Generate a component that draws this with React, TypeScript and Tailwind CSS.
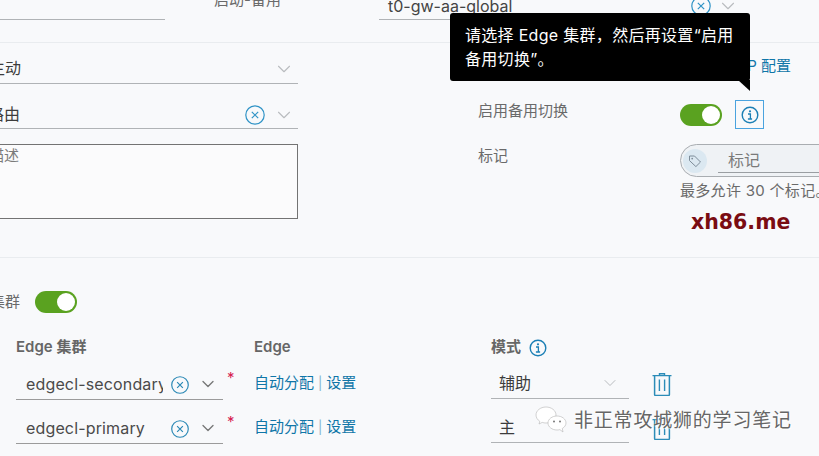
import { ChevronDown } from "lucide-react";

const cjk = "font-['Inter','Noto_Sans_CJK_SC',sans-serif]";

const CircleX = ({ size = 20, color = "#2f93c6", width = 1.2 }: { size?: number; color?: string; width?: number }) => (
  <svg width={size} height={size} viewBox="0 0 20 20" fill="none" className="shrink-0">
    <circle cx="10" cy="10" r="9.2" stroke={color} strokeWidth={width} />
    <path d="M6.8 6.8l6.4 6.4M13.2 6.8l-6.4 6.4" stroke={color} strokeWidth={width} />
  </svg>
);

const InfoIcon = ({ size = 18 }: { size?: number }) => (
  <svg width={size} height={size} viewBox="0 0 18 18" fill="none" className="shrink-0">
    <circle cx="9" cy="9" r="7.8" stroke="#1b7fb5" strokeWidth="1.4" />
    <circle cx="9" cy="5.3" r="1.1" fill="#1b7fb5" />
    <path d="M7 8h2.4v4.6M6.9 13h4.2" stroke="#1b7fb5" strokeWidth="1.3" />
  </svg>
);

const TrashIcon = () => (
  <svg width="20" height="23" viewBox="0 0 20 23" fill="none" className="shrink-0">
    <path d="M7.5 2V.8h5V2M0.5 2.6h19" stroke="#2b8cb8" strokeWidth="1.4" />
    <path d="M2.6 3v18.6a.8.8 0 0 0 .8.8h13.2a.8.8 0 0 0 .8-.8V3" stroke="#2b8cb8" strokeWidth="1.5" />
    <path d="M7.4 6.5v11.5M12.6 6.5v11.5" stroke="#2b8cb8" strokeWidth="1.4" />
  </svg>
);

const Toggle = () => (
  <div className="flex h-[22px] w-[42px] shrink-0 items-center justify-end rounded-full bg-[#5aa220] pr-[2px]">
    <div className="h-[18px] w-[18px] rounded-full bg-white" />
  </div>
);

const Chevron = ({ color = "#b9bcbf" }: { color?: string }) => (
  <ChevronDown size={22} strokeWidth={1.2} color={color} className="shrink-0" />
);

const clusterRows = [
  { name: "edgecl-secondary", mode: "辅助" },
  { name: "edgecl-primary", mode: "主" },
];

export default function App() {
  return (
    <div className={`relative h-[456px] w-[819px] overflow-hidden bg-[#f8f9fb] text-[15px] text-[#565656] ${cjk}`}>
      {/* top row, cut by the screenshot */}
      <div className="flex h-[43px] border-b border-[#e9ecef]">
        <div className="h-[20px] w-[165px] border-b border-[#b0b3b6]" />
        <div className="ml-[49px] -mt-[11px] h-[20px] w-[80px] whitespace-nowrap text-[#6a6a6a]">启动-备用</div>
        <div className="ml-[85px] -mt-[5px] flex h-[25px] w-[360px] items-center border-b border-[#b0b3b6] pb-[2px] pl-[9px] text-[16px] text-[#444]">
          <span className="flex-1">t0-gw-aa-global</span>
          <span className="flex items-center gap-[6px]">
            <CircleX />
            <Chevron />
          </span>
        </div>
      </div>

      {/* middle form */}
      <div className="flex h-[215px] border-b border-[#e9ecef]">
        <div className="w-[298px] shrink-0 pt-[12px]">
          <div className="flex h-[29px] items-center justify-between border-b border-[#b0b3b6] pr-[3px] text-[#3c3c3c]">
            <span className="-ml-[11px] -mt-[2px] text-[16px]">主动</span>
            <Chevron />
          </div>
          <div className="mt-[17px] flex h-[28px] items-center justify-between border-b border-[#b0b3b6] pr-[3px] text-[#3c3c3c]">
            <span className="-ml-[12px] -mt-[2px] text-[16px]">路由</span>
            <span className="flex items-center gap-[8px]">
              <CircleX />
              <Chevron />
            </span>
          </div>
          <div className="mt-[15px] -ml-[2px] h-[75px] overflow-hidden border border-[#737373] bg-[#fbfbfc] leading-[22px] text-[#7b7b7b]">
            <span className="-ml-[10px] block">描述</span>
          </div>
        </div>

        <div className="ml-[180px] w-[341px] shrink-0">
          <div className="flex h-[46px] justify-end pr-[28px] pt-[12px] text-[#0f76a8]">P 配置</div>
          <div className="mt-[11px] flex h-[29px] items-center">
            <span className="-mt-[7px] w-[202px] shrink-0 text-[#6a6a6a]">启用备用切换</span>
            <Toggle />
            <span className="ml-[13px] flex h-[29px] w-[29px] shrink-0 items-center justify-center border border-[#4aa3df]">
              <InfoIcon />
            </span>
          </div>
          <div className="mt-[15px] flex">
            <span className="w-[202px] shrink-0 pt-[1px] text-[#6a6a6a]">标记</span>
            <div>
              <div className="flex h-[33px] w-[200px] items-center rounded-l-full border border-[#a9adb1] bg-[#eff2f5] pl-[2px]">
                <span className="flex h-[24px] w-[24px] shrink-0 items-center justify-center rounded-full bg-[#dbe8f1]">
                  <svg width="14" height="14" viewBox="0 0 14 14" fill="none">
                    <path d="M1.5 2h5l6 6-4.6 4.6-6.4-6z" stroke="#7d8c99" strokeWidth="1" />
                    <circle cx="4.2" cy="4.6" r="0.9" fill="#7d8c99" />
                  </svg>
                </span>
                <span className="ml-[11px] flex h-[25px] w-[200px] items-center border-b border-[#9a9ea2] pl-[10px] text-[16px] text-[#7a7a7a]">标记</span>
              </div>
              <div className="mt-[3px] whitespace-nowrap tracking-[0.3px] text-[#6a6a6a]">最多允许 30 个标记。</div>
            </div>
          </div>
          <div className="ml-[213px] mt-[4px] whitespace-nowrap font-['DejaVu_Sans',sans-serif] text-[20.5px] font-bold leading-[30px] text-[#7a0c12]">xh86.me</div>
        </div>
      </div>

      {/* edge clusters */}
      <div className="flex items-center pt-[33px]">
        <span className="-ml-[10px] w-[45px] shrink-0 text-[#6a6a6a]">集群</span>
        <Toggle />
      </div>
      <div className="ml-[16px] mt-[24px] flex h-[20px] items-center font-semibold text-[#666]">
        <span className="w-[238px]">Edge 集群</span>
        <span className="w-[237px]">Edge</span>
        <span className="flex items-center gap-[8px]">
          模式
          <InfoIcon />
        </span>
      </div>
      <div className="ml-[16px] mt-[11px] flex flex-col gap-[13px]">
        {clusterRows.map((row) => (
          <div key={row.name} className="flex h-[31px]">
            <div className="flex h-[31px] w-[207px] shrink-0 items-center border-b border-[#9b9b9b] pl-[10px] text-[16px] tracking-[0.15px] text-[#4a4a4a]">
              <span className="w-[137px] shrink-0 overflow-hidden whitespace-nowrap">{row.name}</span>
              <span className="ml-[8px] mt-[2px]"><CircleX size={18} color="#2a88b5" width={1.3} /></span>
              <ChevronDown size={20} strokeWidth={1.6} color="#777" className="ml-[9px]" />
            </div>
            <span className="ml-[4px] -mt-[2px] w-[27px] shrink-0 text-[#d6204e]">*</span>
            <div className="flex h-[30px] w-[237px] shrink-0 items-center whitespace-nowrap text-[#0f76a8]">
              自动分配<span className="mx-[4px] text-[13px] text-[#7fb2cc]">|</span>设置
            </div>
            <div className="flex h-[30px] w-[138px] shrink-0 items-center justify-between border-b border-[#b0b3b6] pl-[8px] pr-[9px] text-[16px] text-[#3c3c3c]">
              {row.mode}
              {row.mode === "辅助" ? <ChevronDown size={20} strokeWidth={1.2} color="#b9bcbf" /> : null}
            </div>
            <span className="ml-[23px] mt-[4px]"><TrashIcon /></span>
          </div>
        ))}
      </div>

      {/* tooltip */}
      <div className="absolute left-[450px] top-[13px] h-[68px] w-[300px] rounded-[3px] bg-black px-[15px] py-[10px] text-[16px] leading-[24px] tracking-[0.3px] text-white">
        请选择 Edge 集群，然后再设置“启用备用切换”。
        <svg width="12" height="11" viewBox="0 0 12 11" className="absolute right-0 top-[67px]">
          <path d="M0 0h12v11z" fill="#000" />
        </svg>
      </div>

      {/* wechat watermark */}
      <div className="absolute left-[535px] top-[405px] flex items-center">
        <svg width="32" height="29" viewBox="0 0 32 29" fill="#fff" stroke="#b4b4b4" strokeWidth="0.6">
          <path d="M11 1C5.5 1 1 4.6 1 9c0 2.6 1.5 4.8 3.8 6.3L4 18l3.2-1.6c1.2.4 2.4.6 3.8.6 5.5 0 10-3.6 10-8s-4.5-8-10-8z" />
          <path d="M22 10c-4.900 0-9 3.100-9 7s4.100 7 9 7c1 0 2-.1 2.900-.4L28 26l-.7-3.500c2.200-1.300 3.700-3.300 3.700-5.500 0-3.900-4.100-7-9-7z" />
          <circle cx="19" cy="15.500" r="1" fill="#777" stroke="none" />
          <circle cx="25" cy="15.500" r="1" fill="#777" stroke="none" />
        </svg>
        <span className="ml-[7px] mt-[2px] whitespace-nowrap text-[19px] tracking-[0.8px] text-[#666] [text-shadow:0_0_2px_#fff,1px_1px_0_#fff]">非正常攻城狮的学习笔记</span>
      </div>
    </div>
  );
}
